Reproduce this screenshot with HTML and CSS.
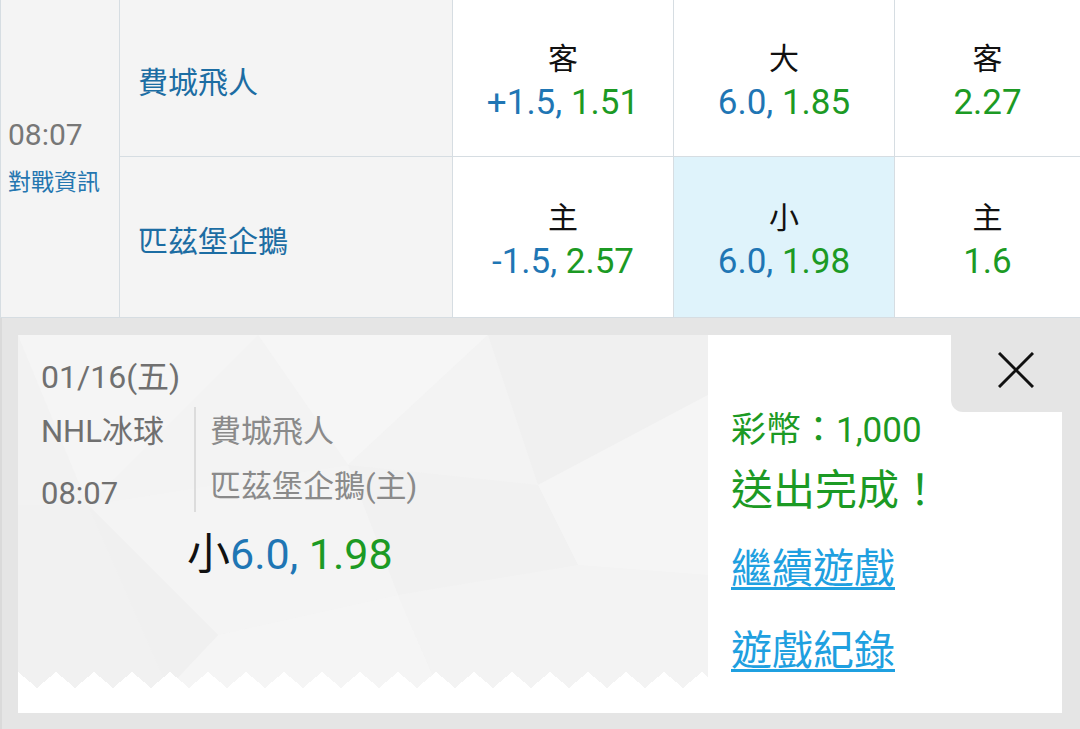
FILE: index.html
```html
<!DOCTYPE html>
<html lang="zh-Hant">
<head>
<meta charset="utf-8">
<title>投注單</title>
<link rel="stylesheet" href="styles.css">
</head>
<body>
<div class="board">
  <div class="time-cell">
    <div class="kick">08:07</div>
    <a class="info">對戰資訊</a>
  </div>
  <div class="team">費城飛人</div>
  <div class="odd"><span class="lbl">客</span><span class="val"><span class="blue">+1.5,</span> <span class="green">1.51</span></span></div>
  <div class="odd"><span class="lbl">大</span><span class="val"><span class="blue">6.0,</span> <span class="green">1.85</span></span></div>
  <div class="odd"><span class="lbl">客</span><span class="val"><span class="green">2.27</span></span></div>
  <div class="team">匹茲堡企鵝</div>
  <div class="odd"><span class="lbl">主</span><span class="val"><span class="blue">-1.5,</span> <span class="green">2.57</span></span></div>
  <div class="odd sel"><span class="lbl">小</span><span class="val"><span class="blue">6.0,</span> <span class="green">1.98</span></span></div>
  <div class="odd"><span class="lbl">主</span><span class="val"><span class="green">1.6</span></span></div>
</div>

<div class="overlay">
  <div class="slip">
    <div class="ticket">
      <svg class="poly" viewBox="0 0 690 353" preserveAspectRatio="none">
        <rect width="690" height="353" fill="#f2f2f2"/>
        <polygon points="0,0 240,0 70,170" fill="#f5f5f5"/>
        <polygon points="240,0 470,0 330,130" fill="#f6f6f6"/>
        <polygon points="240,0 330,130 70,170" fill="#f3f3f3"/>
        <polygon points="470,0 690,0 690,60 520,150" fill="#f0f0f0"/>
        <polygon points="470,0 520,150 330,130" fill="#f3f3f3"/>
        <polygon points="690,60 690,240 560,230 520,150" fill="#f5f5f5"/>
        <polygon points="520,150 560,230 380,260 330,130" fill="#f1f1f1"/>
        <polygon points="0,170 70,170 150,353 0,353" fill="#f1f1f1"/>
        <polygon points="70,170 330,130 380,260 200,300" fill="#f4f4f4"/>
        <polygon points="200,300 380,260 420,353 150,353" fill="#f5f5f5"/>
        <polygon points="380,260 560,230 690,240 690,353 420,353" fill="#f3f3f3"/>
        <polygon points="70,170 200,300 150,353" fill="#f0f0f0"/>
      </svg>
      <div class="ticket-body">
        <div class="date">01/16(五)</div>
        <div class="match">
          <div class="meta">
            <div>NHL冰球</div>
            <div>08:07</div>
          </div>
          <div class="teams">
            <div>費城飛人</div>
            <div>匹茲堡企鵝(主)</div>
          </div>
        </div>
        <div class="pick">小<span class="blue">6.0,</span> <span class="green">1.98</span></div>
      </div>
      <div class="zigzag"></div>
    </div>
    <div class="panel">
      <div class="coins">彩幣：1,000</div>
      <div class="done">送出完成！</div>
      <a class="link first">繼續遊戲</a>
      <a class="link second">遊戲紀錄</a>
    </div>
    <div class="close">
      <svg width="36" height="36" viewBox="0 0 36 36"><path d="M1 1 L35 35 M35 1 L1 35" stroke="#111" stroke-width="3" fill="none"/></svg>
    </div>
  </div>
</div>
</body>
</html>
```

FILE: styles.css
```css
html, body {
  margin: 0;
  padding: 0;
}
body {
  width: 1080px;
  height: 729px;
  overflow: hidden;
  background: #e5e5e5;
  font-family: Roboto, "Noto Sans CJK TC", sans-serif;
}
.blue { color: #1f76b4; }
.green { color: #1c9a24; }

.board {
  display: grid;
  grid-template-columns: 118px 332px 220px 220px 1fr;
  grid-template-rows: 156px 160px;
  gap: 1px;
  padding: 0 0 1px 1px;
  background: #d6dde2;
}
.time-cell {
  grid-row: span 2;
  background: #f4f4f4;
  display: flex;
  flex-direction: column;
  justify-content: center;
  padding: 0 0 4px 7px;
}
.kick {
  font-size: 30px;
  line-height: 40px;
  color: #777;
}
.info {
  margin-top: 12px;
  font-size: 23px;
  line-height: 32px;
  color: #2476b0;
}
.team {
  background: #f4f4f4;
  display: flex;
  align-items: center;
  padding: 3px 0 0 18px;
  font-size: 30px;
  color: #1c6da3;
}
.odd {
  background: #fff;
  display: flex;
  flex-direction: column;
  align-items: center;
  justify-content: center;
  padding-top: 5px;
}
.odd.sel { background: #dff3fb; }
.lbl {
  font-size: 30px;
  line-height: 44px;
  color: #111;
}
.val {
  font-size: 35px;
  line-height: 44px;
}

.overlay {
  height: 411px;
  box-sizing: border-box;
  padding: 17px 0 0 16px;
  border-left: 2px solid #dadada;
}
.slip {
  position: relative;
  width: 1044px;
  height: 378px;
  display: flex;
}
.ticket {
  position: relative;
  width: 690px;
  background: #fff;
}
.poly {
  position: absolute;
  left: 0;
  top: 0;
  width: 690px;
  height: 353px;
}
.ticket-body {
  position: relative;
  height: 337px;
  box-sizing: border-box;
  padding: 22px 0 0 23px;
}
.date {
  font-size: 32px;
  line-height: 40px;
  color: #707070;
}
.match {
  display: flex;
  align-items: flex-start;
  margin-top: 10px;
}
.meta {
  width: 153px;
  font-size: 31px;
  color: #707070;
}
.meta div { line-height: 50px; }
.meta div + div { margin-top: 12px; }
.teams {
  border-left: 2px solid #dcdcdc;
  padding-left: 14px;
  font-size: 31px;
  color: #8a8a8a;
}
.teams div { line-height: 50px; }
.teams div + div { margin-top: 5px; }
.pick {
  margin-top: 10px;
  padding-left: 146px;
  font-size: 43px;
  line-height: 50px;
  color: #111;
}
.zigzag {
  position: relative;
  height: 16px;
  background: conic-gradient(from 130deg at 50% 0, #fff 0deg 100deg, transparent 100deg) 19px 0 / 38px 16px repeat-x;
}

.panel {
  flex: 1;
  background: #fff;
  padding-left: 23px;
  display: flex;
  flex-direction: column;
  align-items: flex-start;
}
.coins {
  margin-top: 74px;
  font-size: 35px;
  line-height: 44px;
  color: #1c9a24;
}
.done {
  margin-top: 10px;
  font-size: 42px;
  line-height: 56px;
  color: #1c9a24;
}
.link {
  font-size: 41px;
  line-height: 56px;
  color: #1fa0e0;
  text-decoration: underline;
  text-decoration-thickness: 3px;
  text-underline-offset: 4px;
}
.link.first { margin-top: 22px; }
.link.second { margin-top: 26px; }
.close {
  position: absolute;
  top: 0;
  right: -18px;
  width: 129px;
  height: 77px;
  background: #e5e5e5;
  border-bottom-left-radius: 12px;
  display: flex;
  justify-content: center;
  align-items: flex-start;
  padding-top: 17px;
  box-sizing: border-box;
}
.close svg { display: block; }
```
